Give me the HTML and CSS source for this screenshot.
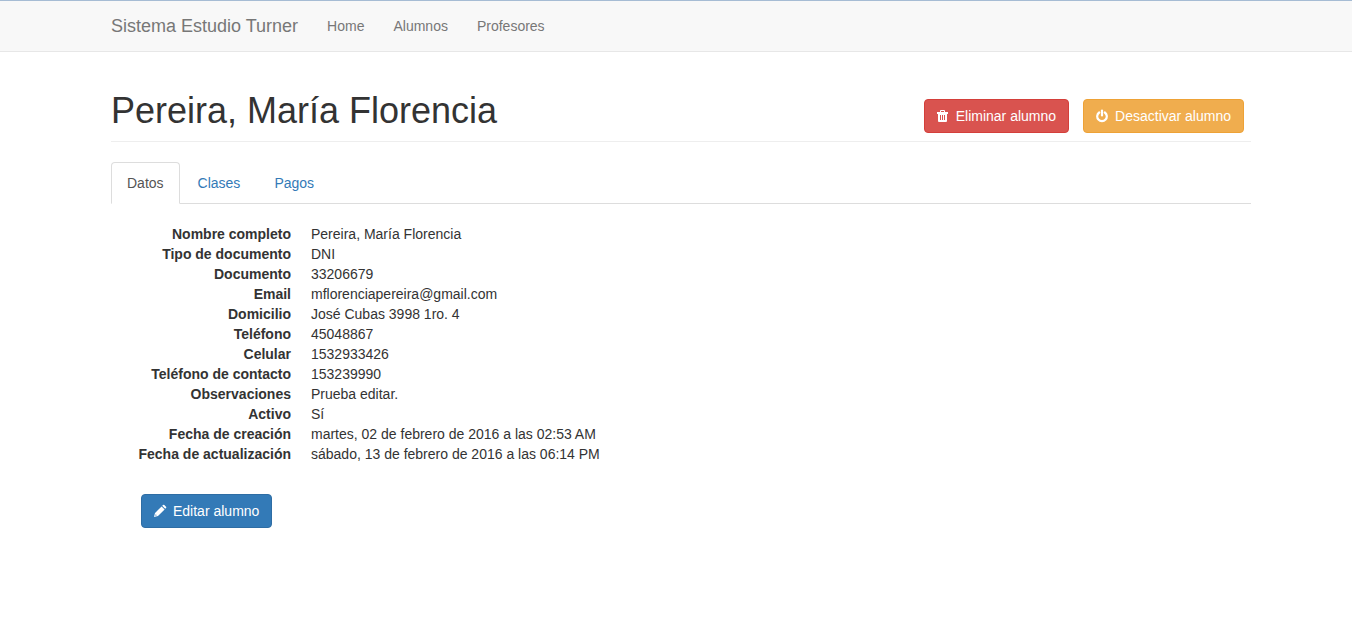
FILE: index.html
```html
<!DOCTYPE html>
<html lang="es">
<head>
<meta charset="utf-8">
<meta name="viewport" content="width=device-width, initial-scale=1">
<title>Sistema Estudio Turner</title>
<link rel="stylesheet" href="styles.css">
</head>
<body>
<header class="navbar">
  <nav class="container navbar-inner">
    <a class="brand" href="#">Sistema Estudio Turner</a>
    <a class="nav-link" href="#">Home</a>
    <a class="nav-link" href="#">Alumnos</a>
    <a class="nav-link" href="#">Profesores</a>
  </nav>
</header>
<main class="page">
  <div class="container">
    <div class="page-header">
      <h1 class="title">Pereira, María Florencia</h1>
      <div class="actions">
        <button type="button" class="btn btn-danger">
          <svg class="icon" viewBox="0 0 14 14" aria-hidden="true"><path fill="currentColor" fill-rule="evenodd" d="M3 3V2q0-1 1-1h3q1 0 1 1v1h3v2H0V3zM4 3h3V2H4zM1 5h9v7q0 1-1 1H2q-1 0-1-1zM3 6v5h1V6zM5 6v5h1V6zM7 6v5h1V6z"/></svg>
          <span>Eliminar alumno</span>
        </button>
        <button type="button" class="btn btn-warning">
          <svg class="icon" viewBox="0 0 14 14" aria-hidden="true"><g fill="none" stroke="currentColor" stroke-width="2.200" stroke-linecap="round"><path d="M3.200 3.500a4.800 4.800 0 1 0 5.600 0"/><path d="M6 1.500v5"/></g></svg>
          <span>Desactivar alumno</span>
        </button>
      </div>
    </div>
    <ul class="tabs">
      <li><a class="tab tab-active" href="#datos" aria-current="page">Datos</a></li>
      <li><a class="tab" href="#clases">Clases</a></li>
      <li><a class="tab" href="#pagos">Pagos</a></li>
    </ul>
    <section id="datos" class="panel">
      <dl class="details">
        <dt>Nombre completo</dt><dd>Pereira, María Florencia</dd>
        <dt>Tipo de documento</dt><dd>DNI</dd>
        <dt>Documento</dt><dd>33206679</dd>
        <dt>Email</dt><dd>mflorenciapereira@gmail.com</dd>
        <dt>Domicilio</dt><dd>José Cubas 3998 1ro. 4</dd>
        <dt>Teléfono</dt><dd>45048867</dd>
        <dt>Celular</dt><dd>1532933426</dd>
        <dt>Teléfono de contacto</dt><dd>153239990</dd>
        <dt>Observaciones</dt><dd>Prueba editar.</dd>
        <dt>Activo</dt><dd>Sí</dd>
        <dt>Fecha de creación</dt><dd>martes, 02 de febrero de 2016 a las 02:53 AM</dd>
        <dt>Fecha de actualización</dt><dd>sábado, 13 de febrero de 2016 a las 06:14 PM</dd>
      </dl>
      <div class="edit-row">
        <button type="button" class="btn btn-primary">
          <svg class="icon" viewBox="0 0 14 14" aria-hidden="true"><path fill="currentColor" fill-rule="evenodd" d="M0 13l1-4 6.600-6.600 3 3L4 12zM1.300 11.700l1.500-.4-1.100-1.100zM8.200 1.800l.8-.8q.7-.6 1.300 0l1.700 1.700q.6.7 0 1.300l-.8.8z"/></svg>
          <span>Editar alumno</span>
        </button>
      </div>
    </section>
  </div>
</main>
</body>
</html>
```

FILE: styles.css
```css
* {
  box-sizing: border-box;
}

body {
  margin: 0;
  background: #fff;
  color: #333;
  font-family: "Liberation Sans", Arial, sans-serif;
  font-size: 14px;
  line-height: 20px;
}

a {
  color: #337ab7;
  text-decoration: none;
}

.container {
  max-width: 1140px;
  margin: 0 auto;
}

.navbar,
.page {
  padding-left: 10px;
}

.navbar {
  background: #f8f8f8;
  border-top: 1px solid #a6bcd4;
  border-bottom: 1px solid #e7e7e7;
}

.navbar-inner {
  display: flex;
  flex-wrap: wrap;
  align-items: center;
  gap: 29px;
  min-height: 50px;
}

.brand,
.nav-link {
  color: #777;
}

.brand {
  font-size: 18px;
}

.page-header {
  display: flex;
  flex-wrap: wrap;
  align-items: flex-end;
  justify-content: space-between;
  margin-top: 40px;
  padding-bottom: 8px;
  border-bottom: 1px solid #eee;
}

.title {
  margin: 0 0 4px;
  font-size: 36px;
  font-weight: 500;
  line-height: 37px;
}

.actions {
  display: flex;
  flex-wrap: wrap;
  gap: 14px;
  padding-right: 7px;
}

.btn {
  display: inline-flex;
  align-items: center;
  gap: 5px;
  padding: 6px 12px;
  border: 1px solid transparent;
  border-radius: 4px;
  color: #fff;
  font: inherit;
  cursor: pointer;
}

.btn-danger {
  background: #d9534f;
  border-color: #d43f3a;
}

.btn-warning {
  background: #f0ad4e;
  border-color: #eea236;
}

.btn-primary {
  background: #337ab7;
  border-color: #2e6da4;
}

.icon {
  width: 14px;
  height: 14px;
}

.tabs {
  display: flex;
  margin: 20px 0;
  padding: 0;
  border-bottom: 1px solid #ddd;
  list-style: none;
}

.tab {
  display: block;
  margin: 0 2px -1px 0;
  padding: 10px 15px;
  border: 1px solid transparent;
  border-radius: 4px 4px 0 0;
}

.tab-active {
  background: #fff;
  border-color: #ddd #ddd #fff;
  color: #555;
}

.panel {
  padding-left: 20px;
}

.details {
  display: grid;
  grid-template-columns: 160px 1fr;
  column-gap: 20px;
  margin: 0;
}

.details dt {
  font-weight: 700;
  text-align: right;
  white-space: nowrap;
}

.details dd {
  margin: 0;
}

.edit-row {
  padding: 30px 10px;
}
```
